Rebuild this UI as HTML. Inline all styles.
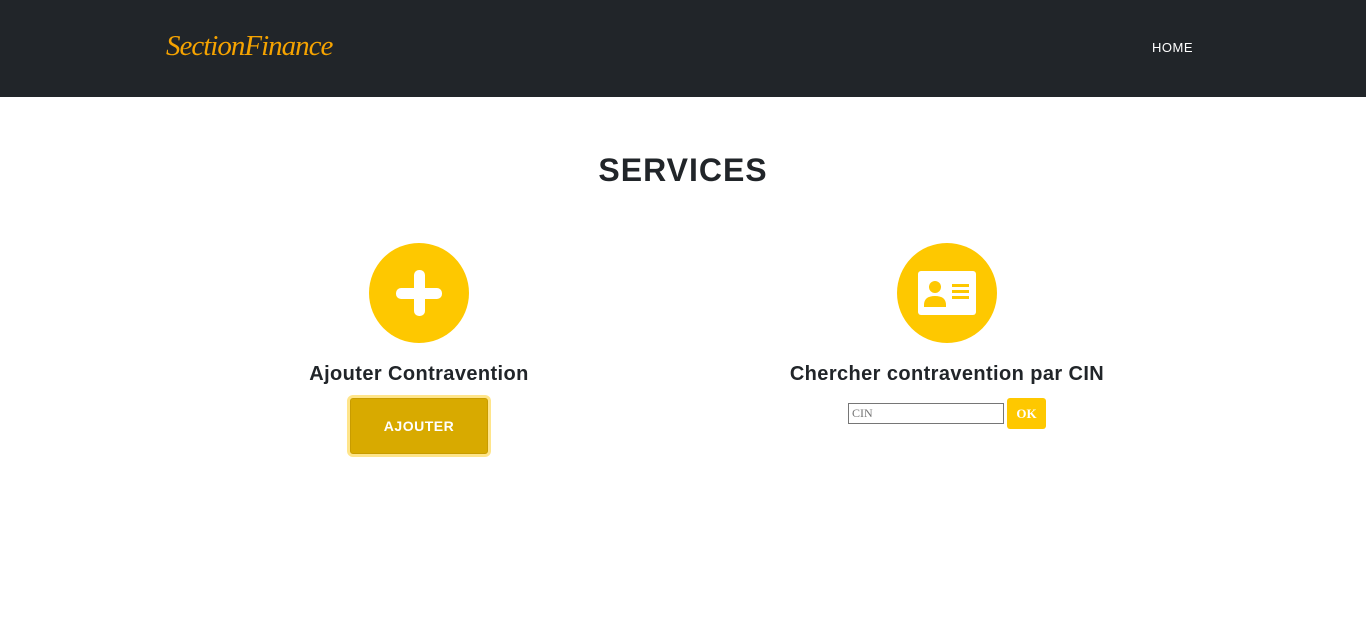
<!DOCTYPE html>
<html><head><meta charset="utf-8"><style>
body{margin:0;width:1366px;height:623px;background:#fff;font-family:"Liberation Sans",sans-serif;position:relative;overflow:hidden}
.nav{position:absolute;left:0;top:0;width:1366px;height:97px;background:#212529}
.logo{position:absolute;left:166px;top:30px;color:#f5a300;font:italic 29px "Liberation Serif",serif;letter-spacing:-1px}
.home{position:absolute;left:1152px;top:40px;color:#fff;font-size:13px;letter-spacing:0.5px}
h1{position:absolute;top:152px;left:0;width:1366px;text-align:center;margin:0;font-size:32px;font-weight:bold;color:#212529;letter-spacing:1px}
.c{position:absolute;width:100px;height:100px;border-radius:50%;background:#fec800}
.t{position:absolute;font-size:20px;font-weight:bold;color:#212529;text-align:center;letter-spacing:0.4px}
.btn{position:absolute;left:350px;top:398px;width:136px;height:54px;background:#d8aa00;border:1px solid #c89c00;border-radius:3px;box-shadow:0 0 0 3px #ffe58a;color:#fff;font-weight:bold;font-size:14px;text-align:center;line-height:54px;letter-spacing:0.5px}
.in{position:absolute;left:848px;top:403px;border:1px solid #767676;font:12px "Liberation Serif",serif;color:#757575;line-height:19px;padding-left:3px;box-sizing:border-box;width:156px;height:21px}
.ok{position:absolute;left:1007px;top:398px;width:39px;height:31px;background:#fec800;border-radius:3px;color:#fff;font:bold 13px "Liberation Serif",serif;text-align:center;line-height:31px}
</style></head><body>
<div class="nav"><div class="logo">SectionFinance</div><div class="home">HOME</div></div>
<h1>SERVICES</h1>
<div class="c" style="left:369px;top:243px"><svg width="100" height="100"><rect x="27" y="45" width="46" height="11" rx="5" fill="#fff"/><rect x="45" y="27" width="11" height="46" rx="5" fill="#fff"/></svg></div>
<div class="c" style="left:897px;top:243px"><svg width="100" height="100"><rect x="21" y="28" width="58" height="44" rx="3" fill="#fff"/><circle cx="38" cy="44" r="6" fill="#fec800"/><path d="M27 62 q0-9 11-9 q11 0 11 9 v2 h-22z" fill="#fec800"/><rect x="55" y="41" width="17" height="3" fill="#fec800"/><rect x="55" y="47" width="17" height="3" fill="#fec800"/><rect x="55" y="53" width="17" height="3" fill="#fec800"/></svg></div>
<div class="t" style="left:219px;width:400px;top:363px">Ajouter Contravention</div>
<div class="t" style="left:747px;width:400px;top:363px">Chercher contravention par CIN</div>
<div class="btn">AJOUTER</div>
<div class="in">CIN</div><div class="ok">OK</div>
</body></html>
